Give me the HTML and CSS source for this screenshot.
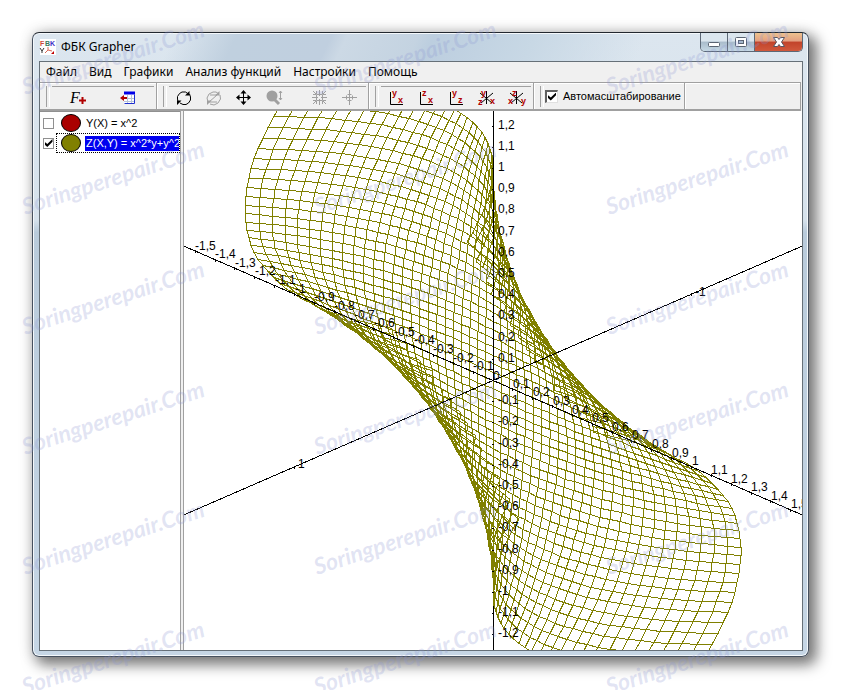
FILE: index.html
```html
<!DOCTYPE html>
<html lang="ru">
<head>
<meta charset="utf-8">
<title>ФБК Grapher</title>
<link rel="stylesheet" href="styles.css">
</head>
<body>
<main class="window">
  <header class="titlebar">
    <svg class="app-icon" width="16" height="16" viewBox="0 0 16 16" aria-hidden="true">
      <rect width="16" height="16" fill="#fff"/>
      <text class="app-letter" x="0" y="7" fill="#d0483a">F</text>
      <text class="app-letter" x="5" y="7" fill="#3a7a5c">B</text>
      <text class="app-letter" x="10" y="7" fill="#3c30c8">K</text>
      <path d="M0 9l2 3 2-3M2 12v2" stroke="#333" fill="none"/>
      <path d="M8 8v3l-3 3M8 11l4 1" stroke="#d86a5a" fill="none"/>
      <path d="M11 15l3-3v3z" fill="#c00000"/>
    </svg>
    <h1 class="title">ФБК Grapher</h1>
    <div class="controls">
      <button class="control" aria-label="Свернуть"><svg width="14" height="14" viewBox="0 0 14 14"><rect x="1.500" y="7.500" width="11" height="4" rx="1" fill="#fff" stroke="#5a6472"/></svg></button>
      <button class="control" aria-label="Развернуть"><svg width="14" height="14" viewBox="0 0 14 14"><rect x="1.500" y="2.500" width="11" height="9" rx="1" fill="#fff" stroke="#5a6472"/><rect x="4.500" y="5.500" width="5" height="3" fill="#a9bccd" stroke="#5a6472"/></svg></button>
      <button class="control close" aria-label="Закрыть"><svg width="14" height="14" viewBox="0 0 14 14"><path d="M1.500 2.500h4L7 4.500l1.500-2h4L9.500 7l3 4.500h-4L7 9.500l-1.500 2h-4L4.500 7z" fill="#fff" stroke="#5a5560"/></svg></button>
    </div>
  </header>

  <section class="client">
    <nav class="menu">
      <a href="#">Файл</a><a href="#">Вид</a><a href="#">Графики</a><a href="#">Анализ функций</a><a href="#">Настройки</a><a href="#">Помощь</a>
    </nav>

    <div class="toolbars">
      <div class="band band-add">
        <button class="tool" aria-label="Добавить функцию"><svg width="18" height="16" viewBox="0 0 18 16"><text class="f-letter" x="1" y="13">F</text><path d="M13.500 7v7M10 10.500h7" stroke="#b00000" stroke-width="2"/></svg></button>
        <button class="tool" aria-label="Добавить таблицу"><svg width="16" height="16" viewBox="0 0 16 16"><rect x="4" y="3" width="11" height="11" fill="#fff"/><path d="M4 8.500h11M4 11.500h11M7.500 5v9M11.500 5v9" stroke="#b8c4d8"/><path d="M4.500 13.500h10v-9" stroke="#2030d0" fill="none"/><path d="M4 1.500h11v3H4z" fill="#0000e8"/><path d="M0 8l4-3v2h3v2H4v2z" fill="#b00000"/></svg></button>
      </div>
      <div class="band band-view">
        <button class="tool" aria-label="Вращать"><svg width="16" height="16" viewBox="0 0 16 16" fill="none" stroke="#000"><path d="M2 12L1.500 9V6.500L3.500 3.500 6 2h3.500l3 2"/><path d="M13.500 4l1 3v3l-2 3-2.500 1.500H7L4 13"/><path d="M13.500 1v4.500H9zM1 15v-4.500h4.500z" fill="#000" stroke="none"/></svg></button>
        <button class="tool" disabled aria-label="Вращать вокруг Z"><svg width="16" height="16" viewBox="0 0 16 16" fill="none" stroke="#a0a0a0"><path d="M2 12L1 8l2-4 4-2h3l3 2M14 5l.5 4-2.500 4-4 2-4-1M4 5h7l-8 7h8"/><path d="M13.500 1v4.500H9zM1 15v-4.500h4.500z" fill="#a0a0a0" stroke="none"/></svg></button>
        <button class="tool" aria-label="Перемещать"><svg width="16" height="16" viewBox="0 0 16 16"><path d="M7.500 2v12M1 7.500h13" stroke="#000"/><path d="M7.500 0l3 3.500h-6zM7.500 15l-3-3.500h6zM0 7.500l3.500-3v6zM15 7.500l-3.500-3v6z"/></svg></button>
        <button class="tool" disabled aria-label="Масштаб"><svg width="18" height="16" viewBox="0 0 18 16"><circle cx="7" cy="6" r="5.500" fill="#a0a0a0"/><path d="M9 9l5 5" stroke="#a0a0a0" stroke-width="3"/><path d="M15.500 1v9M14 3l1.500-2L17 3M14 8l1.500 2L17 8" stroke="#a0a0a0" fill="none"/></svg></button>
        <span class="tool-separator"></span>
        <button class="tool" disabled aria-label="Сжать"><svg width="16" height="16" viewBox="0 0 16 16" fill="none" stroke="#a0a0a0"><path d="M0 7.500h6M9 7.500h6M7.500 0v6M7.500 9v6M4.500 5v5M10.500 5v5M5 4.500h5M5 10.500h5M1 1l3 3M14 1l-3 3M1 14l3-3M14 14l-3-3M1 4.500h3.500V1M10.500 1v3.500H14M1 10.500h3.500V14M10.500 14v-3.500H14"/></svg></button>
        <button class="tool" disabled aria-label="Растянуть"><svg width="16" height="16" viewBox="0 0 16 16" fill="none" stroke="#a0a0a0"><path d="M0 7.500h15M7.500 0v15M4.500 5.500v4M10.500 5.500v4M5.500 4.500h4M5.500 10.500h4"/></svg></button>
      </div>
      <div class="band band-planes">
        <button class="tool" aria-label="Плоскость YX"><svg width="16" height="16" viewBox="0 0 16 16"><path d="M1.500 2v12.500H14" fill="none" stroke="#000"/><text class="axis" x="3" y="6">y</text><text class="axis" x="9" y="13">x</text></svg></button>
        <button class="tool" aria-label="Плоскость ZX"><svg width="16" height="16" viewBox="0 0 16 16"><path d="M1.500 2v12.500H14" fill="none" stroke="#000"/><text class="axis" x="3" y="6">z</text><text class="axis" x="9" y="13">x</text></svg></button>
        <button class="tool" aria-label="Плоскость YZ"><svg width="16" height="16" viewBox="0 0 16 16"><path d="M1.500 2v12.500H14" fill="none" stroke="#000"/><text class="axis" x="3" y="6">y</text><text class="axis" x="9" y="13">z</text></svg></button>
        <button class="tool" aria-label="Объём YZX"><svg width="18" height="16" viewBox="0 0 18 16"><path d="M8.500 1v13M2 3l12 10M15 3L3 13" fill="none" stroke="#000"/><text class="axis" x="3" y="6">y</text><text class="axis" x="0" y="15">z</text><text class="axis" x="12" y="14">x</text></svg></button>
        <button class="tool" aria-label="Объём ZXY"><svg width="18" height="16" viewBox="0 0 18 16"><path d="M8.500 1v13M2 3l12 10M15 3L3 13" fill="none" stroke="#000"/><text class="axis" x="4" y="6">z</text><text class="axis" x="0" y="14">x</text><text class="axis" x="13" y="14">y</text></svg></button>
      </div>
      <div class="band band-scale">
        <input class="check sunken" type="checkbox" id="autoscale" checked>
        <label for="autoscale">Автомасштабирование</label>
      </div>
    </div>

    <div class="workspace">
      <ul class="functions">
        <li class="function">
          <input class="check" type="checkbox" id="fn-y">
          <span class="row"><span class="dot red"></span><label for="fn-y">Y(X) = x^2</label></span>
        </li>
        <li class="function">
          <input class="check" type="checkbox" id="fn-z" checked>
          <span class="row selected"><span class="dot olive"></span><label for="fn-z">Z(X,Y) = x^2*y+y^2*x</label></span>
        </li>
      </ul>
      <div class="splitter"></div>
      <div class="plot">
        <svg class="plot-canvas" role="img" aria-label="Z(X,Y)">
          <svg id="scene" x="50%" y="50%" overflow="visible"></svg>
        </svg>
      </div>
    </div>
  </section>
</main>
<svg class="watermarks" id="watermarks" aria-hidden="true"></svg>
<script src="plot.js"></script>
</body>
</html>
```
FILE: styles.css
```css
* { box-sizing: border-box; }
html { height: 100%; }
body {
  margin: 0;
  min-height: 100%;
  display: flex;
  padding: 32px 33px 33px 32px;
  overflow: hidden;
  background: #fff;
  font: 12px "Noto Sans", sans-serif;
  color: #000;
}
.window {
  flex: 1;
  min-width: 0;
  display: flex;
  flex-direction: column;
  padding: 0 5px 5px 6px;
  border: 1px solid #46505e;
  border-top-color: #22282f;
  border-radius: 7px;
  background:
    linear-gradient(115deg, transparent 18%, #c0d0df 26%, #c0cfdf 38%, #ccd9e5 40%, #c4d3e1 49%, #bccedf 51%, #c8d8e5 64%, transparent 78%) top / 100% 29px no-repeat,
    linear-gradient(#dce6ef 0, #d6e2ec 30%, #b9cbdb 32%, #c6d6e5 100%);
  box-shadow: inset 0 0 0 1px #f4f8fb, 6px 6px 14px 2px rgba(0, 0, 0, .5), 0 0 16px rgba(0, 0, 0, .12);
}
.titlebar { display: flex; align-items: flex-start; height: 28px; }
.app-icon { margin: 6px 5px 0 1px; }
.app-letter { font: bold 7px "Liberation Sans", sans-serif; }
.title { margin: 5px 0 0; font: 12px/18px "Noto Sans", sans-serif; }
.controls {
  display: flex;
  margin-left: auto;
  height: 19px;
  border: 1px solid #5c6876;
  border-top: 0;
  border-radius: 0 0 5px 5px;
  overflow: hidden;
}
.control {
  width: 27px;
  padding: 0;
  border: 0;
  border-right: 1px solid #5c6876;
  background: linear-gradient(#dbe6ee 45%, #a9bccb 50%, #c5d8e4);
  display: grid;
  place-items: center;
}
.close { width: 47px; border-right: 0; background: linear-gradient(#edc28f 0, #e39f80 45%, #c2432a 50%, #d0593c); }
.client {
  flex: 1;
  min-height: 0;
  display: flex;
  flex-direction: column;
  border: 1px solid #667078;
  background: #f0f0f0;
}
.menu { display: flex; gap: 12px; padding: 0 6px; height: 20px; line-height: 20px; }
.menu a { color: #000; text-decoration: none; white-space: nowrap; }
.toolbars {
  display: flex;
  height: 29px;
  margin-right: 1px;
  border: 1px solid #a0a0a0;
  border-bottom-width: 2px;
  border-left: 0;
  box-shadow: inset 0 1px #fff;
}
.band {
  position: relative;
  display: flex;
  align-items: center;
  padding: 4px 5px 0 13px;
  border-right: 1px solid #a0a0a0;
  box-shadow: 1px 0 #fff;
}
.band::before {
  content: "";
  width: 2px;
  height: 21px;
  position: absolute;
  left: 6px;
  top: 3px;
  border-left: 1px solid #a0a0a0;
  border-right: 1px solid #fff;
}
.band::after {
  content: "";
  position: absolute;
  left: 12px;
  right: 2px;
  top: 3px;
  border-top: 1px solid #a0a0a0;
}
.band-scale::after { display: none; }
.band-add { width: 117px; }
.band-view { width: 212px; padding-left: 12px; }
.band-planes { width: 165px; padding-right: 0; }
.band-scale { width: 151px; padding: 0 4px 0 11px; gap: 5px; font-family: "Liberation Sans", sans-serif; font-size: 11px; }
.tool {
  flex: none;
  width: 30px;
  height: 22px;
  padding: 0;
  border: 0;
  background: none;
  display: grid;
  place-items: center;
}
.tool svg, .app-icon { overflow: visible; }
.band-add .tool { width: 50px; }
.tool-separator { width: 1px; height: 16px; margin: 0 8px; background: #a0a0a0; }
.f-letter { font: italic 16px "Liberation Serif", serif; }
.axis { font: bold 9px "Liberation Sans", sans-serif; fill: #b00000; }
.check {
  appearance: none;
  flex: none;
  width: 11px;
  height: 11px;
  margin: 0;
  border: 1px solid #909090;
  background: #fff;
}
.check:checked {
  display: grid;
  place-items: center;
}
.check:checked::before {
  content: "";
  width: 8px;
  height: 8px;
  background: #000;
  clip-path: polygon(0 35%, 35% 62%, 100% 0, 100% 35%, 35% 100%, 0 70%);
}
.check.sunken { width: 13px; height: 13px; border: 2px solid #606060; border-right: 1px solid #e0e0e0; border-bottom: 1px solid #e0e0e0; }
.workspace { flex: 1; min-height: 0; display: flex; background: #fff; }
.functions {
  width: 140px;
  margin: 0;
  padding: 1px 0 0;
  list-style: none;
  border-top: 1px solid #909090;
  font: 11px "Liberation Sans", sans-serif;
}
.function { display: flex; align-items: center; height: 20px; padding-left: 3px; gap: 2px; }
.row {
  flex: 1;
  min-width: 0;
  height: 20px;
  display: flex;
  align-items: center;
  gap: 4px;
  padding-left: 4px;
  border: 1px solid transparent;
  overflow: hidden;
  white-space: nowrap;
}
.row.selected { border: 1px dotted #000; }
.row label { padding: 1px; line-height: 13px; }
.row.selected label { background: #0000f0; color: #fff; }
.dot { flex: none; width: 20px; height: 18px; border: 1px solid #000; border-radius: 50%; }
.red { background: #aa0000; }
.olive { background: #808000; }
.splitter { width: 4px; border: 1px solid #a0a0a0; border-width: 0 1px; background: #f0f0f0; }
.plot { flex: 1; min-width: 0; display: flex; }
.plot-canvas { flex: 1; min-width: 0; width: 100%; height: 100%; overflow: hidden; }
.mesh { fill: none; stroke: #808000; shape-rendering: crispEdges; }
.axis-line { fill: none; stroke: #000; shape-rendering: crispEdges; }
.tick-label { font: 12px "Liberation Sans", sans-serif; }
.watermarks {
  position: absolute;
  inset: 0;
  width: 100%;
  height: 100%;
  pointer-events: none;
}
.watermarks text {
  font: italic bold 23px Lato, sans-serif;
  fill: #8c96d2;
  fill-opacity: .26;
}
```
FILE: plot.js
```js
const NS = "http://www.w3.org/2000/svg";
const scene = document.getElementById("scene");

// Oblique projection: x runs right-down, y up, z left-down.
const UX = 198.5, UD = 86.3, UY = 212;
const project = (x, y, z) => [UX * (x - z), UD * (x + z) - UY * y];
const surface = (x, y) => x * x * y + y * y * x;

function add(parent, name, attrs, text) {
  const el = document.createElementNS(NS, name);
  for (const key in attrs) el.setAttribute(key, attrs[key]);
  if (text) el.textContent = text;
  parent.appendChild(el);
  return el;
}

const STEPS = 50, Z_LIMIT = 0.5;

function meshLine(pointAt) {
  let d = "", pen = false;
  for (let i = 0; i <= STEPS; i++) {
    const [x, y] = pointAt(-1 + 2 * i / STEPS);
    const z = surface(x, y);
    if (Math.abs(z) > Z_LIMIT) { pen = false; continue; }
    const [px, py] = project(x, y, z);
    d += (pen ? "L" : "M") + Math.round(px) + " " + Math.round(py);
    pen = true;
  }
  return d;
}

add(scene, "path", { class: "axis-line", d: "M0 0V2000" });
let mesh = "";
for (let i = 0; i <= STEPS; i++) {
  const c = -1 + 2 * i / STEPS;
  mesh += meshLine(t => [c, t]) + meshLine(t => [t, c]);
}
add(scene, "path", { class: "mesh", d: mesh });

const far = 5;
const [ax, ay] = project(far, 0, 0);
const [bx, by] = project(0, 0, far);
let axes = `M0 0V-2000M${-ax} ${-ay}L${ax} ${ay}M${-bx} ${-by}L${bx} ${by}`;
const label = (x, y, text) => add(scene, "text", { class: "tick-label", x: Math.round(x), y: Math.round(y) }, text);
const format = n => (n / 10).toString().replace(".", ",");

for (let n = -15; n <= 15; n++) {
  if (n === 0) continue;
  const [x, y] = project(n / 10, 0, 0);
  axes += `M${x} ${y - 1}v3`;
  label(x, y - 2, format(n));
  if (Math.abs(n) <= 12) {
    const vy = project(0, n / 10, 0)[1];
    axes += `M-1 ${vy}h2`;
    label(5, vy + 2, format(n));
  }
}
for (const n of [-1, 1]) {
  const [x, y] = project(0, 0, n);
  axes += `M${x} ${y - 1}v3`;
  label(x + 3, y + 1, String(n));
}
label(0, -1, "0");
add(scene, "path", { class: "axis-line", d: axes });

const marks = document.getElementById("watermarks");
for (let row = 0; row < 6; row++) {
  for (let col = 0; col < 3; col++) {
    const x = 25 + col * 292, y = 95 + row * 120;
    add(marks, "text", { transform: `translate(${x} ${y}) rotate(-18)` }, "Soringperepair.Com");
  }
}
```
